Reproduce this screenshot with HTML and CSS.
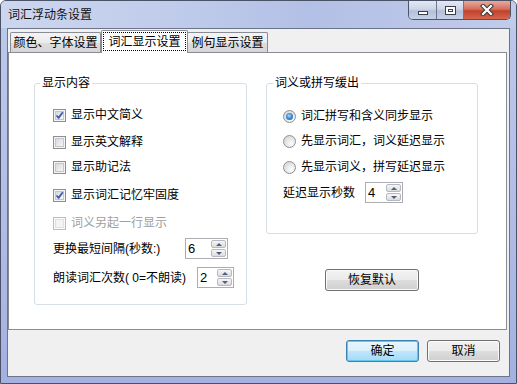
FILE: index.html
```html
<!DOCTYPE html>
<html lang="zh-CN">
<head>
    <meta charset="UTF-8">
    <title>词汇浮动条设置</title>
    <link rel="stylesheet" href="styles.css">
</head>
<body>
    <div class="window">
        <!-- Title bar -->
        <div class="titlebar">
            <span class="title">词汇浮动条设置</span>
            <div class="caption-btns">
                <span class="cbtn min"><i></i></span>
                <span class="cbtn max"><i></i></span>
                <span class="cbtn close">
                    <svg width="14" height="12" viewBox="0 0 14 12">
                        <path d="M3 2 L11 10 M11 2 L3 10" stroke="#3a3a3a" stroke-width="4.2" stroke-linecap="square"/>
                        <path d="M3 2 L11 10 M11 2 L3 10" stroke="#ffffff" stroke-width="2.2" stroke-linecap="square"/>
                    </svg>
                </span>
            </div>
        </div>

        <!-- Client area -->
        <div class="client">
            <div class="tabs">
                <div class="tab tab-1">颜色、字体设置</div>
                <div class="tab tab-2 active"><span class="focus">词汇显示设置</span></div>
                <div class="tab tab-3">例句显示设置</div>
            </div>

            <div class="panel">
                <fieldset class="group g1">
                    <legend>显示内容</legend>
                    <div class="group-body">
                        <div class="row r1"><span class="cb checked"><svg width="9" height="9" viewBox="0 0 9 9"><path d="M1.5 4.5 L3.6 6.8 L7.8 1.2" fill="none" stroke="#3c5ca8" stroke-width="1.8"/></svg></span><span class="lbl">显示中文简义</span></div>
                        <div class="row r2"><span class="cb"></span><span class="lbl">显示英文解释</span></div>
                        <div class="row r3"><span class="cb"></span><span class="lbl">显示助记法</span></div>
                        <div class="row r4"><span class="cb checked"><svg width="9" height="9" viewBox="0 0 9 9"><path d="M1.5 4.5 L3.6 6.8 L7.8 1.2" fill="none" stroke="#3c5ca8" stroke-width="1.8"/></svg></span><span class="lbl">显示词汇记忆牢固度</span></div>
                        <div class="row r5 disabled"><span class="cb"></span><span class="lbl">词义另起一行显示</span></div>
                        <div class="row spin-row s1">
                            <span class="spin-lbl w1">更换最短间隔(秒数:)</span>
                            <div class="spin sp1"><span class="val">6</span><span class="arrows"><b class="up"></b><b class="down"></b></span></div>
                        </div>
                        <div class="row spin-row s2">
                            <span class="spin-lbl w2">朗读词汇次数( 0=不朗读)</span>
                            <div class="spin sp2"><span class="val">2</span><span class="arrows"><b class="up"></b><b class="down"></b></span></div>
                        </div>
                    </div>
                </fieldset>

                <div class="right-col">
                    <fieldset class="group g2">
                        <legend>词义或拼写缓出</legend>
                        <div class="group-body">
                            <div class="row q1"><span class="rb on"></span><span class="lbl">词汇拼写和含义同步显示</span></div>
                            <div class="row q2"><span class="rb"></span><span class="lbl">先显示词汇，词义延迟显示</span></div>
                            <div class="row q3"><span class="rb"></span><span class="lbl">先显示词义，拼写延迟显示</span></div>
                            <div class="row spin-row s3">
                                <span class="spin-lbl w3">延迟显示秒数</span>
                                <div class="spin sp3"><span class="val">4</span><span class="arrows"><b class="up"></b><b class="down"></b></span></div>
                            </div>
                        </div>
                    </fieldset>
                    <button class="btn reset">恢复默认</button>
                </div>
            </div>

            <div class="footer">
                <button class="btn default">确定</button>
                <button class="btn">取消</button>
            </div>
        </div>
    </div>
</body>
</html>
```

FILE: styles.css
```css
* { margin: 0; padding: 0; box-sizing: border-box; }
body { width: 517px; height: 384px; overflow: hidden; font-family: "Liberation Sans", "Noto Sans CJK SC", sans-serif; font-size: 12px; color: #000; background: #fff; }

/* Window frame */
.window { width: 517px; height: 384px; border: 1px solid #4a5268; border-radius: 6px 6px 0 0; display: flex; flex-direction: column; background: linear-gradient(180deg, #c9d3ee 0, #bcc8ea 28px, #b0bce6 60%, #a4b0e0 100%); }
.titlebar { height: 27px; display: flex; align-items: center; padding-left: 7px; background: linear-gradient(90deg, #ccd6ef 0, #bfcbea 35%, #b3c0e5 60%, #c1cbea 100%); border-radius: 5px 5px 0 0; }
.title { line-height: 14px; color: #111; }
.caption-btns { margin-left: auto; margin-right: 5px; align-self: flex-start; display: flex; height: 19px; border: 1px solid #4c5468; border-top: none; border-radius: 0 0 5px 5px; overflow: hidden; }
.cbtn { height: 18px; display: flex; align-items: center; justify-content: center; }
.cbtn.min { width: 28px; background: linear-gradient(180deg, #e3e8f3 0, #cdd5e8 45%, #b3bfdb 55%, #c7d1e6 100%); border-right: 1px solid #6d768b; }
.cbtn.max { width: 27px; background: linear-gradient(180deg, #e3e8f3 0, #cdd5e8 45%, #b3bfdb 55%, #c7d1e6 100%); border-right: 1px solid #6d768b; }
.cbtn.close { width: 46px; background: linear-gradient(180deg, #e9a99c 0, #d4705d 45%, #c2412c 55%, #d4664d 100%); }
.cbtn.min i { display: block; width: 10px; height: 4px; margin-top: 5px; background: #fff; border: 1px solid #3b3f4a; }
.cbtn.max i { display: block; width: 11px; height: 9px; background: #fff; border: 1px solid #3b3f4a; box-shadow: inset 0 0 0 2px #fff, inset 0 0 0 3px #3b3f4a; }

/* Client area */
.client { flex: 1; margin: 0 6px 6px 6px; border: 1px solid #6c748a; background: #f0f0f0; display: flex; flex-direction: column; padding-top: 1px; }

/* Tabs */
.tabs { height: 22px; display: flex; align-items: flex-end; padding-left: 2px; position: relative; z-index: 2; }
.tab { height: 20px; border: 1px solid #898c95; border-bottom: none; border-radius: 2px 2px 0 0; background: linear-gradient(180deg, #f4f4f4 0, #ebebeb 50%, #dddddd 51%, #d6d6d6 100%); display: flex; align-items: center; justify-content: center; line-height: 14px; padding-top: 1px; }
.tab-1 { width: 91px; }
.tab-2 { width: 87px; }
.tab-3 { width: 81px; margin-left: -1px; }
.tab.active { height: 23px; margin-bottom: -1px; background: #fff; padding-top: 0; align-items: flex-start; padding-top: 1px; }
.focus { display: flex; align-items: center; justify-content: center; width: 83px; height: 19px; border: 1px dotted #000; }

/* Tab page */
.panel { width: 499px; height: 278px; border: 1px solid #898c95; background: #fff; display: flex; align-items: flex-start; padding: 23px 0 0 25px; position: relative; z-index: 1; }
.group { border: 1px solid #d5dfe5; border-radius: 3px; min-width: 0; padding: 0; }
.group legend { margin-left: 5px; padding: 0 2px; line-height: 14px; }
.g1 { width: 213px; height: 229px; }
.right-col { margin-left: 19px; display: flex; flex-direction: column; }
.g2 { width: 212px; height: 158px; }
.g2 legend { margin-left: 6px; }
.group-body { display: flex; flex-direction: column; }
.g1 .group-body { padding-left: 18px; }
.g2 .group-body { padding-left: 16px; }

.row { display: flex; align-items: center; height: 14px; line-height: 14px; }
.row .lbl { margin-left: 5px; }
.r1 { margin-top: 18px; }
.r2 { margin-top: 13px; }
.r3 { margin-top: 11px; }
.r4 { margin-top: 14px; }
.r5 { margin-top: 14px; }
.disabled { color: #a0a0a0; }
.spin-row { height: 21px; }
.s1 { margin-top: 8px; }
.s2 { margin-top: 8px; }
.q1 { margin-top: 19px; }
.q2 { margin-top: 11px; }
.q3 { margin-top: 12px; }
.s3 { margin-top: 8px; }
.w1 { width: 132px; }
.w2 { width: 144px; }
.w3 { width: 82px; }

/* Checkbox */
.cb { width: 13px; height: 13px; flex: none; border: 1px solid #8e8f8f; background: linear-gradient(135deg, #cdd1d7 0, #e6e8eb 50%, #fbfbfb 100%); box-shadow: inset 0 0 0 1px #f4f4f4, inset 0 0 0 2px #c3c7cd; display: flex; align-items: center; justify-content: center; }
.disabled .cb { border-color: #bcbdbd; background: #f4f4f4; box-shadow: inset 0 0 0 1px #fbfbfb, inset 0 0 0 2px #e1e1e1; }

/* Radio */
.rb { width: 13px; height: 13px; flex: none; border-radius: 50%; border: 1px solid #8e8f8f; background: radial-gradient(circle at 65% 70%, #fdfdfd 0, #e3e3e3 55%, #cfcfcf 100%); display: flex; align-items: center; justify-content: center; }
.rb.on::before { content: ""; width: 7px; height: 7px; border-radius: 50%; background: radial-gradient(circle at 45% 40%, #aee0ff 0, #3d8edb 45%, #1c4f95 100%); }

/* Spin box */
.spin { height: 21px; display: flex; border: 1px solid #abadb3; background: #fff; }
.sp1 { width: 43px; }
.sp2 { width: 37px; }
.sp3 { width: 38px; }
.spin .val { flex: 1; padding-left: 2px; font-size: 13px; line-height: 19px; }
.arrows { width: 16px; padding: 1px 1px 1px 0; display: flex; flex-direction: column; gap: 1px; }
.arrows b { flex: 1; border: 1px solid #b6b9bf; border-radius: 2px; background: linear-gradient(180deg, #f7f7f7 0, #e9e9e9 50%, #dcdcdc 100%); display: flex; align-items: center; justify-content: center; }
.arrows .up::before { content: ""; border-left: 3px solid transparent; border-right: 3px solid transparent; border-bottom: 3px solid #4e5f86; }
.arrows .down::before { content: ""; border-left: 3px solid transparent; border-right: 3px solid transparent; border-top: 3px solid #4e5f86; }

/* Buttons */
.btn { width: 73px; height: 22px; font-family: inherit; font-size: 12px; line-height: 14px; color: #000; border: 1px solid #707070; border-radius: 3px; background: linear-gradient(180deg, #f2f2f2 0, #ebebeb 48%, #dddddd 52%, #cfcfcf 100%); box-shadow: inset 0 0 0 1px #fbfbfb; }
.btn.default { border-color: #3c7fb1; background: linear-gradient(180deg, #eaf6fd 0, #d9f0fc 48%, #bee6fd 52%, #a7d9f5 100%); box-shadow: inset 0 0 0 1px #5fc7f2; }
.reset { width: 94px; margin: 35px 0 0 59px; }
.footer { display: flex; justify-content: flex-end; gap: 8px; padding: 10px 9px 0 0; }
```
